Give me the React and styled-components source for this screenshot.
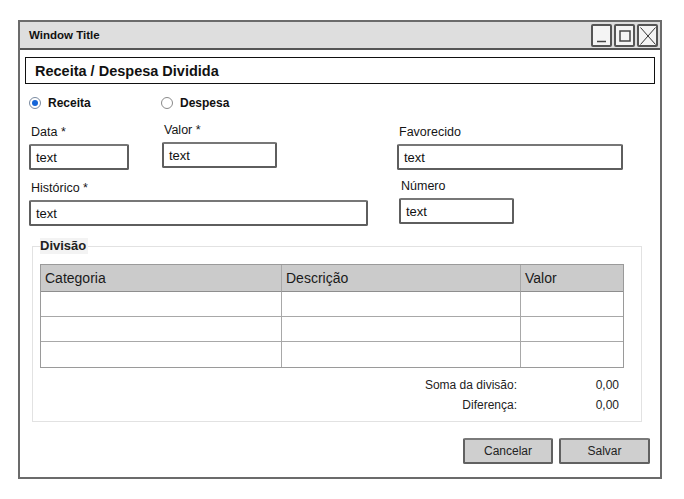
import styled, { createGlobalStyle } from 'styled-components'

const GlobalStyle = createGlobalStyle`
  body {
    margin: 0;
    background: #fff;
    font-family: "Liberation Sans", Arial, sans-serif;
    color: #111;
  }
`

const Page = styled.div`
  padding: 20px 0 0 18px;
`

const Window = styled.div`
  width: 644px;
  height: 459px;
  box-sizing: border-box;
  border: 2px solid #6b6b6b;
  display: flex;
  flex-direction: column;
`

const TitleBar = styled.div`
  height: 26px;
  background: #dedede;
  border-bottom: 2px solid #555;
  display: flex;
  align-items: center;
  justify-content: space-between;
  padding: 0 2px 0 9px;
  box-sizing: content-box;

  .title {
    font-size: 11.5px;
    font-weight: bold;
  }
`

const Controls = styled.div`
  display: flex;
  gap: 2px;
  margin-top: 1px;
`

const ControlBox = styled.div`
  width: 17px;
  height: 19px;
  border: 2px solid #555;
  border-radius: 2px;
  background: #f4f4f4;
  display: flex;
  align-items: center;
  justify-content: center;
`

const Content = styled.div`
  flex: 1;
  display: flex;
  flex-direction: column;
  padding-top: 7px;
`

const Header = styled.div`
  margin: 0 5px;
  height: 25px;
  border: 1.5px solid #111;
  display: flex;
  align-items: center;
  padding-left: 9px;
  font-size: 14.5px;
  font-weight: bold;
`

const RadioRow = styled.div`
  display: flex;
  margin: 12px 0 0 9px;
  height: 14px;
  align-items: center;
`

const Radio = styled.label`
  display: flex;
  align-items: center;
  gap: 7px;
  width: ${p => p.width}px;
  font-size: 12px;
  font-weight: bold;

  .circle {
    width: 10px;
    height: 10px;
    border-radius: 50%;
    border: 1px solid ${p => (p.checked ? '#7a8aa0' : '#8a8a8a')};
    background: #fff;
    display: flex;
    align-items: center;
    justify-content: center;
  }

  .dot {
    width: 6px;
    height: 6px;
    border-radius: 50%;
    background: #1565d8;
  }
`

const FieldRow = styled.div`
  display: flex;
  margin-top: ${p => p.top}px;
  height: 48px;
`

const Field = styled.div`
  margin-left: ${p => p.left}px;
  margin-top: ${p => p.shift || 0}px;
  width: ${p => p.width}px;
  display: flex;
  flex-direction: column;

  .label {
    font-size: 12.5px;
    line-height: 16px;
    height: 16px;
    padding-left: 2px;
    margin-bottom: 4px;
    color: #151515;
  }
`

const Input = styled.div`
  height: 26px;
  box-sizing: border-box;
  border: 2px solid #5e5e5e;
  border-top-color: #777;
  border-radius: 2px;
  display: flex;
  align-items: center;
  padding-left: 5px;
  font-size: 13px;
  color: #111;
`

const Group = styled.fieldset`
  margin: 10px 0 0 12px;
  width: 610px;
  box-sizing: border-box;
  border: 1px solid #e2e2e2;
  padding: 0 17px 6px 7px;
  min-width: 0;

  legend {
    padding: 0 2px 1px 0;
    margin-left: 0;
    background: #f3f3f3;
    font-size: 13px;
    line-height: 15px;
    font-weight: bold;
    color: #222;
  }
`

const Grid = styled.div`
  margin-top: 10px;
  border: 1px solid #9a9a9a;
  display: grid;
  grid-template-columns: 241px 239px 1fr;
  grid-auto-rows: 25px;
  grid-template-rows: 27px;
`

const Cell = styled.div`
  border-right: ${p => (p.last ? 'none' : '1px solid #a8a8a8')};
  border-bottom: ${p => (p.bottom ? 'none' : '1px solid #a8a8a8')};
  background: ${p => (p.head ? '#cbcbcb' : '#fff')};
  display: flex;
  align-items: center;
  padding-left: 4px;
  font-size: 14px;
  color: #1a1a1a;
  ${p => p.head && 'border-bottom-color: #8e8e8e;'}
`

const Row = styled.div`
  display: contents;
`

const Summary = styled.div`
  margin-top: 7px;
  display: grid;
  grid-template-columns: 1fr 102px;
  grid-auto-rows: 20px;
  padding-right: 5px;
  font-size: 12px;
  color: #222;

  span {
    text-align: right;
    line-height: 20px;
  }
`

const Buttons = styled.div`
  display: flex;
  justify-content: flex-end;
  gap: 6px;
  margin: 16px 10px 0 0;
`

const Button = styled.button`
  width: ${p => p.width}px;
  height: 26px;
  border: 2px solid #616161;
  border-top-color: #7a7a7a;
  border-radius: 2px;
  background: #cfcfcf;
  font-family: "Liberation Sans", Arial, sans-serif;
  font-size: 12px;
  color: #222;
  padding: 0;
`

const rows = [0, 1, 2]

export default function App() {
  return (
    <>
      <GlobalStyle />
      <Page>
        <Window>
          <TitleBar>
            <span className="title">Window Title</span>
            <Controls>
              <ControlBox>
                <svg width="11" height="14" viewBox="0 0 11 14">
                  <line x1="1" y1="12.5" x2="10" y2="12.5" stroke="#444" strokeWidth="1.5" />
                </svg>
              </ControlBox>
              <ControlBox>
                <svg width="12" height="12" viewBox="0 0 12 12">
                  <rect x="1" y="1" width="10" height="10" fill="none" stroke="#444" strokeWidth="1.5" />
                </svg>
              </ControlBox>
              <ControlBox>
                <svg width="16" height="18" viewBox="0 0 16 18">
                  <line x1="0.5" y1="0.5" x2="15.5" y2="17.5" stroke="#333" strokeWidth="1" />
                  <line x1="15.5" y1="0.5" x2="0.5" y2="17.5" stroke="#333" strokeWidth="1" />
                </svg>
              </ControlBox>
            </Controls>
          </TitleBar>
          <Content>
            <Header>Receita / Despesa Dividida</Header>
            <RadioRow>
              <Radio width={132} checked>
                <span className="circle"><span className="dot" /></span>
                Receita
              </Radio>
              <Radio>
                <span className="circle" />
                Despesa
              </Radio>
            </RadioRow>
            <FieldRow top={14}>
              <Field left={9} width={100}>
                <span className="label">Data *</span>
                <Input>text</Input>
              </Field>
              <Field left={33} width={115} shift={-2}>
                <span className="label">Valor *</span>
                <Input>text</Input>
              </Field>
              <Field left={120} width={226}>
                <span className="label">Favorecido</span>
                <Input>text</Input>
              </Field>
            </FieldRow>
            <FieldRow top={8}>
              <Field left={9} width={339}>
                <span className="label">Histórico *</span>
                <Input>text</Input>
              </Field>
              <Field left={31} width={115} shift={-2}>
                <span className="label">Número</span>
                <Input>text</Input>
              </Field>
            </FieldRow>
            <Group>
              <legend>Divisão</legend>
              <Grid>
                <Row>
                  <Cell head>Categoria</Cell>
                  <Cell head>Descrição</Cell>
                  <Cell head last>Valor</Cell>
                </Row>
                {rows.map(r => (
                  <Row key={r}>
                    <Cell bottom={r === 2} />
                    <Cell bottom={r === 2} />
                    <Cell bottom={r === 2} last />
                  </Row>
                ))}
              </Grid>
              <Summary>
                <span>Soma da divisão:</span>
                <span>0,00</span>
                <span>Diferença:</span>
                <span>0,00</span>
              </Summary>
            </Group>
            <Buttons>
              <Button width={90}>Cancelar</Button>
              <Button width={91}>Salvar</Button>
            </Buttons>
          </Content>
        </Window>
      </Page>
    </>
  )
}
